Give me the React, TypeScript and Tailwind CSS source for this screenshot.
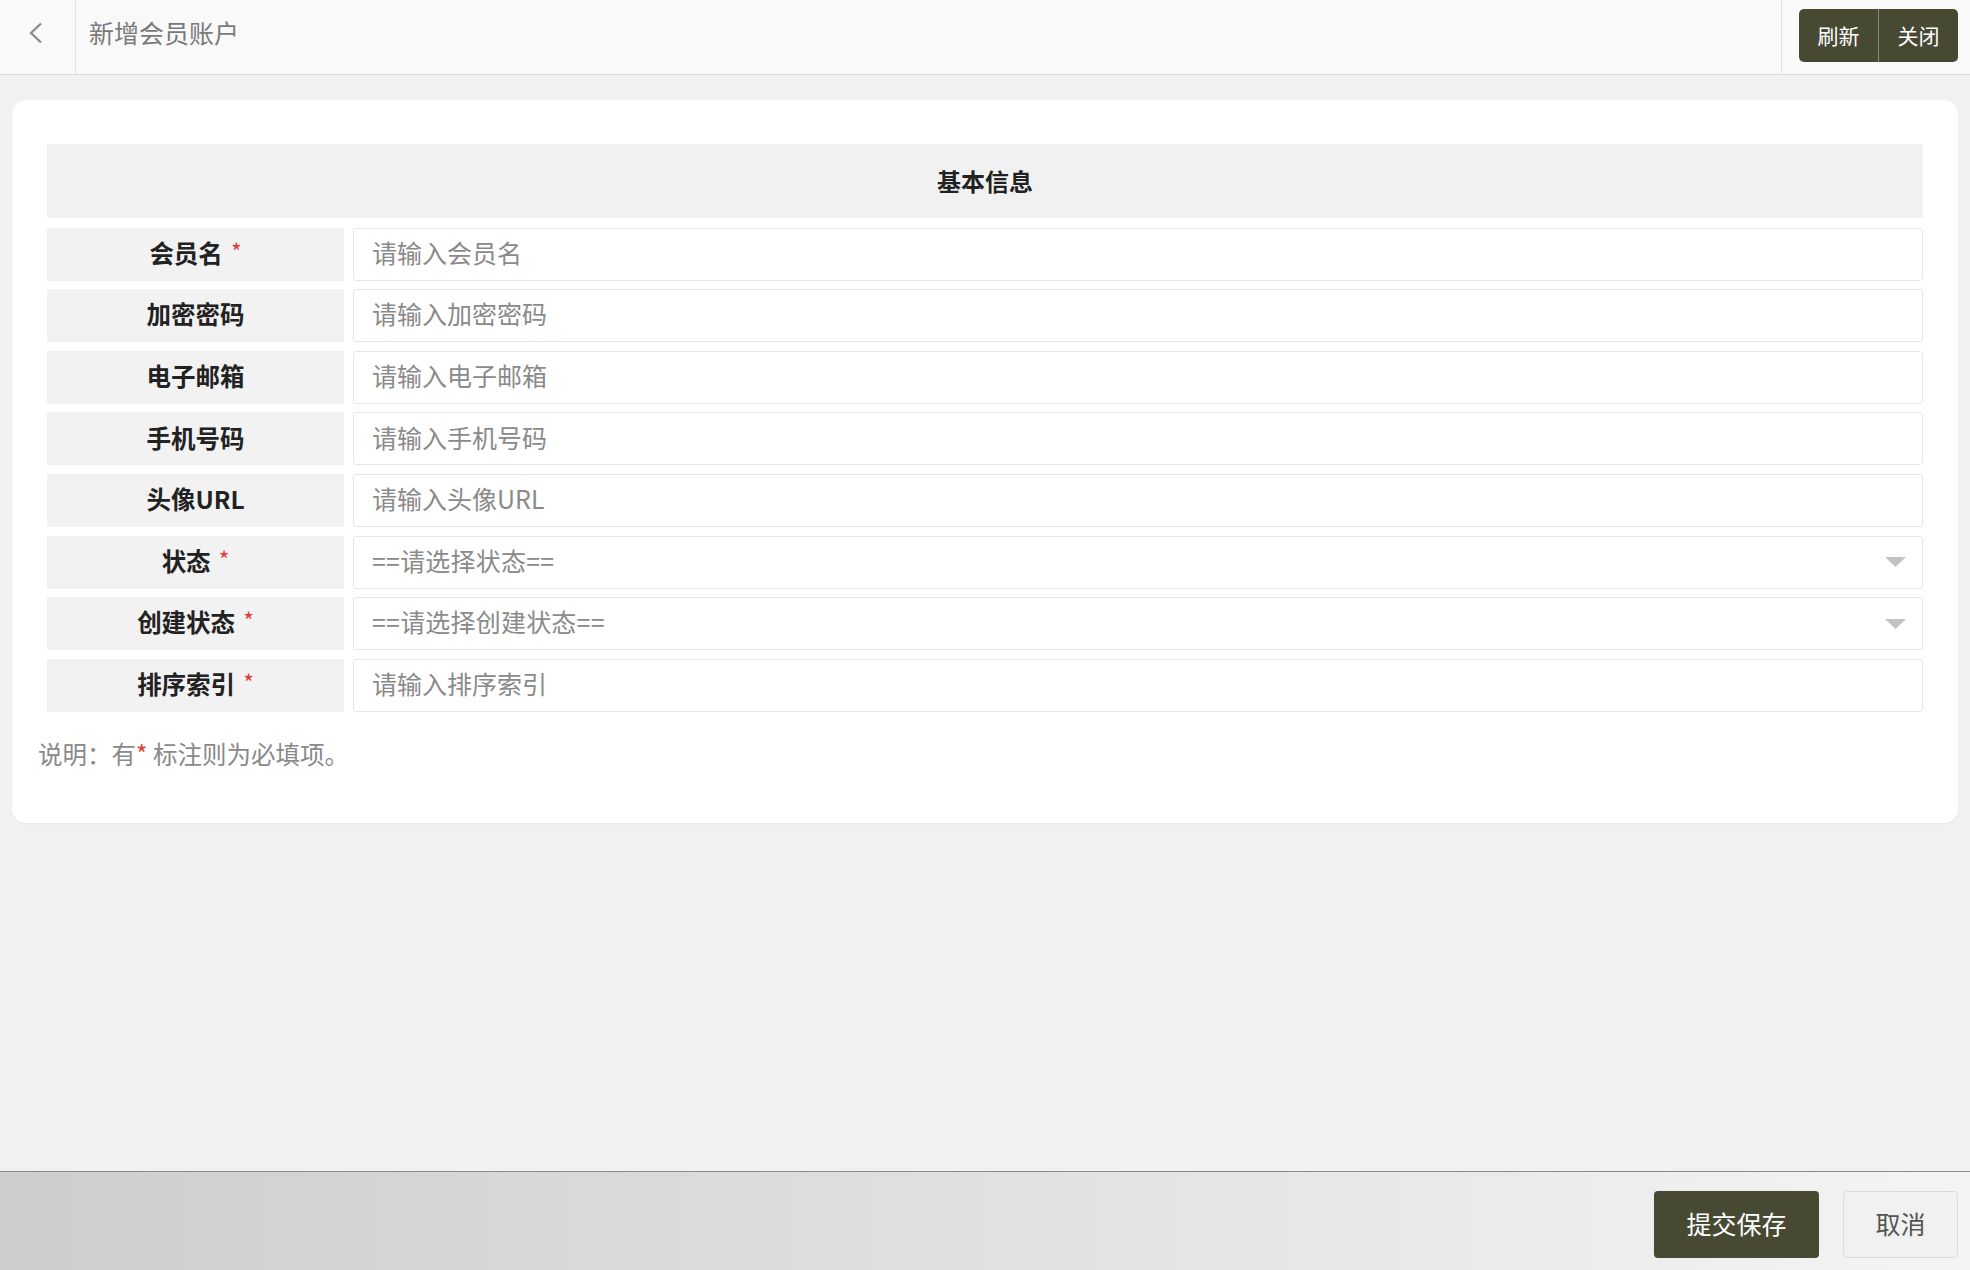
import React from "react";

const font = "font-['Microsoft_YaHei','Noto_Sans_CJK_SC','Noto_Sans',sans-serif]";

type Field = {
  label: string;
  required?: boolean;
  placeholder: string;
  select?: boolean;
};

const fields: Field[] = [
  { label: "会员名", required: true, placeholder: "请输入会员名" },
  { label: "加密密码", placeholder: "请输入加密密码" },
  { label: "电子邮箱", placeholder: "请输入电子邮箱" },
  { label: "手机号码", placeholder: "请输入手机号码" },
  { label: "头像URL", placeholder: "请输入头像URL" },
  { label: "状态", required: true, placeholder: "==请选择状态==", select: true },
  { label: "创建状态", required: true, placeholder: "==请选择创建状态==", select: true },
  { label: "排序索引", required: true, placeholder: "请输入排序索引" },
];

function FormRow({ field }: { field: Field }) {
  return (
    <div className="flex gap-[9px] h-[53px]">
      <div className="w-[297px] shrink-0 bg-[#f2f2f2] flex items-center justify-center pb-[2px] text-[24.5px] font-bold text-[#222]">
        {field.label}
        {field.required && <span className="text-[#e23b30] font-normal text-[23px] ml-2 -mt-1">*</span>}
      </div>
      {field.select ? (
        <div className="flex-1 border border-[#e6e6e6] rounded-[3px] flex items-center justify-between pl-[18px] pr-[16px] pb-[3px] text-[25px] text-[#8a8a8a]">
          <span className="tracking-[0.2px]">{field.placeholder}</span>
          <svg width="21" height="10" viewBox="0 0 21 10" className="mt-[3px]">
            <polygon points="0,0 21,0 10.5,10" fill="#c2c2c2" />
          </svg>
        </div>
      ) : (
        <input
          className="flex-1 border border-[#e6e6e6] rounded-[3px] pl-[18px] pb-[3px] text-[25px] text-[#333] outline-none placeholder:text-[#8a8a8a]"
          placeholder={field.placeholder}
        />
      )}
    </div>
  );
}

export default function App() {
  return (
    <div className={`${font} h-screen flex flex-col bg-[#f1f1f1]`}>
      {/* top bar */}
      <div className="h-[75px] shrink-0 flex bg-[#f9f9f9] border-b border-[#dcdcdc]">
        <button className="w-[76px] shrink-0 flex items-center justify-center border-r border-[#e2e2e2]">
          <svg width="16" height="22" viewBox="0 0 16 22" className="-ml-1 -mt-2">
            <polyline points="13,1.5 3,11 13,20.5" fill="none" stroke="#8a8a8a" strokeWidth="2.2" />
          </svg>
        </button>
        <div className="flex-1 flex items-center pl-[13px] pb-[8px] text-[25px] text-[#7a7a7a]">新增会员账户</div>
        <div className="w-[189px] shrink-0 border-l border-[#e2e2e2] flex items-start justify-end pt-[9px] pr-[12px]">
          <div className="flex h-[53px] rounded-[5px] overflow-hidden bg-[#474933] text-white text-[21px]">
            <button className="w-[80px] flex items-center justify-center border-r border-[#8a8b7a]">刷新</button>
            <button className="w-[79px] flex items-center justify-center">关闭</button>
          </div>
        </div>
      </div>

      {/* main */}
      <div className="flex-1 px-[12px] pt-[25px]">
        <div className="bg-white rounded-[14px] pt-[44px] pb-[50px] shadow-[0_1px_2px_rgba(0,0,0,0.04)]">
          <div className="px-[35px] flex flex-col gap-[8.6px]">
            <div className="h-[74px] bg-[#f1f1f1] flex items-center justify-center text-[24px] font-bold text-[#222] mb-[1px]">
              基本信息
            </div>
            {fields.map((f) => (
              <FormRow key={f.label} field={f} />
            ))}
          </div>
          <div className="pl-[26px] mt-[24px] text-[24.5px] text-[#8a8a8a]">
            说明：有<span className="text-[#e23b30]">*</span> 标注则为必填项。
          </div>
        </div>
      </div>

      {/* footer */}
      <div className="h-[99px] shrink-0 border-t border-[#8a8a8a] bg-linear-to-r from-[#cdcdcd] to-[#f4f4f4] flex items-center justify-end gap-[24px] pr-[12px] pt-[6px]">
        <button className="w-[165px] h-[67px] rounded-[4px] bg-[#474933] text-white text-[25px]">提交保存</button>
        <button className="w-[115px] h-[67px] rounded-[4px] bg-[#f1f1f1] border border-[#dadada] text-[#555] text-[25px]">取消</button>
      </div>
    </div>
  );
}
